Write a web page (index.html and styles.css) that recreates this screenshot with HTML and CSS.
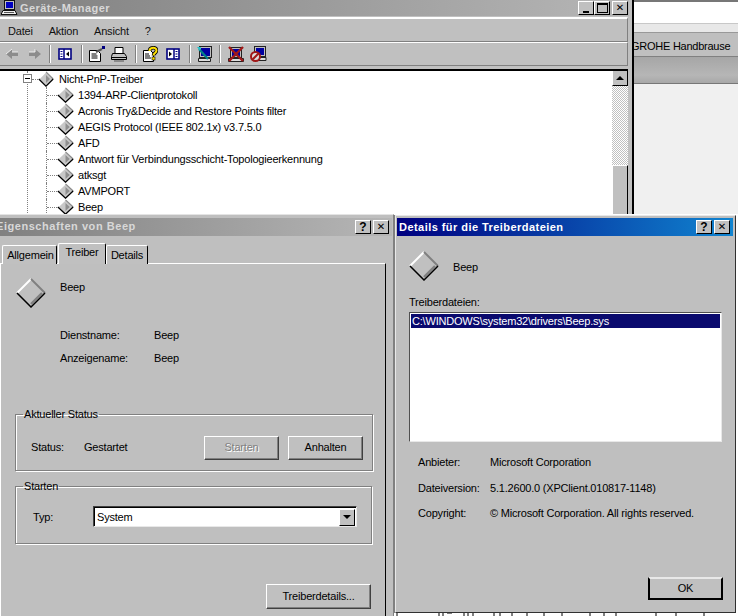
FILE: index.html
```html
<!DOCTYPE html>
<html lang="de">
<head>
<meta charset="utf-8">
<title>Geräte-Manager</title>
<link rel="stylesheet" href="styles.css">
</head>
<body>
<svg class="defs" width="0" height="0" aria-hidden="true">
  <defs>
    <symbol id="dia" viewBox="0 0 20 20" preserveAspectRatio="none">
      <polygon points="10,1 19,10 10,19 1,10" fill="#c8c8c8"/>
      <polygon points="10,5 15,10 10,15" fill="#8f8f8f"/>
      <path d="M1 10 10 1" stroke="#fff" stroke-width="1.400" fill="none"/>
      <path d="M10 1 19 10" stroke="#8a8a8a" stroke-width="1.400" fill="none"/>
      <path d="M1 10 10 19 19 10" stroke="#000" stroke-width="1.500" fill="none"/>
    </symbol>
    <symbol id="bigdia" viewBox="0 0 30 30">
      <polygon points="15,1 29,15 15,29 1,15" fill="#c0c0c0"/>
      <path d="M1 15 15 1" stroke="#fff" stroke-width="2" fill="none"/>
      <path d="M15 1 29 15" stroke="#808080" stroke-width="2" fill="none"/>
      <path d="M1 15 15 29 29 15" stroke="#000" stroke-width="1.500" fill="none"/>
      <path d="M26 15 15 26" stroke="#808080" stroke-width="2.400" fill="none"/>
    </symbol>
  </defs>
</svg>

<section class="win win-right">
  <div class="r-white"></div>
  <div class="r-gap"></div>
  <div class="r-band">GROHE Handbrause</div>
  <div class="r-dark"></div>
  <div class="r-light"></div>
</section>

<section class="win win-dm">
  <header class="title title-gray">
    <svg class="appicon" width="17" height="16" viewBox="0 0 17 16">
      <rect x="3.500" y="0.500" width="10" height="9" fill="#c0c0c0" stroke="#111"/>
      <rect x="5" y="2" width="7" height="6" fill="#0000c0"/>
      <path d="M2 10.500h12l2 4H0z" fill="#eee" stroke="#111"/>
      <path d="M3 12.500h10" stroke="#555"/>
    </svg>
    <span class="title-text dim">Geräte-Manager</span>
    <div class="caps">
      <span class="cap"><i class="min"></i></span><span class="cap"><i class="max"></i></span><span class="cap cap-x">✕</span>
    </div>
  </header>
  <nav class="menubar">
    <span>Datei</span><span>Aktion</span><span>Ansicht</span><span>?</span>
  </nav>
  <div class="toolbar">
    <svg class="m0" width="14" height="12" viewBox="0 0 14 12"><path d="M7 1 1 6l6 5V8h6V4H7z" fill="#8c8c8c"/><path d="M7 1 1 6M7 4h6" stroke="#eee" fill="none"/></svg>
    <svg class="m9" width="14" height="12" viewBox="0 0 14 12"><path d="M7 1l6 5-6 5V8H1V4h6z" fill="#8c8c8c"/><path d="M1 4h6V1" stroke="#eee" fill="none"/></svg>
    <i class="sep m7"></i>
    <svg class="m7" width="14" height="12" viewBox="0 0 14 12"><rect x="1" y="1" width="12" height="10" fill="#fff" stroke="#000080" stroke-width="1.600"/><path d="M6 1v10" stroke="#000080" stroke-width="1.500"/><path d="M11 3.500v5L8 6z" fill="#000"/><path d="M2.500 3.500h2M2.500 6h2M2.500 8.500h2" stroke="#000080"/></svg>
    <i class="sep m9"></i>
    <svg class="m5" width="18" height="16" viewBox="0 0 18 16"><path d="M1.500 4.500h8l3 3v8h-11z" fill="#fff" stroke="#000"/><path d="M3.500 8h5M3.500 10h6M3.500 12h6" stroke="#000"/><path d="M8 6l6-3" stroke="#555" stroke-width="2"/><rect x="14" y="0" width="3" height="3" fill="#000080"/></svg>
    <svg class="m5" width="16" height="15" viewBox="0 0 16 15"><path d="M4 .5h8v6H4z" fill="#fff" stroke="#000"/><path d="M1.500 6.500h12l2 3v3H.5v-3z" fill="#c0c0c0" stroke="#000"/><path d="M1 10.500h14" stroke="#000"/><path d="M3 14h10" stroke="#555"/></svg>
    <i class="sep m8"></i>
    <svg class="m6" width="15" height="16" viewBox="0 0 15 16"><path d="M.5 4.500h7l3 3v8H.5z" fill="#fff" stroke="#000"/><path d="M2 8h4M2 10h5M2 12h6" stroke="#000"/><path d="M6.500 5C6.500 1 13.500.5 13.500 4.500 13.500 7 10.500 7 10.500 9.500" stroke="#000" stroke-width="3.600" fill="none"/><path d="M6.500 5C6.500 1 13.500.5 13.500 4.500 13.500 7 10.500 7 10.500 9.500" stroke="#ffe000" stroke-width="2" fill="none"/><rect x="9" y="11" width="3" height="3" fill="#ffe000" stroke="#000" stroke-width="0.600"/></svg>
    <svg class="m8" width="14" height="12" viewBox="0 0 14 12"><rect x="1" y="1" width="12" height="10" fill="#fff" stroke="#000080" stroke-width="1.600"/><path d="M8 1v10" stroke="#000080" stroke-width="1.500"/><path d="M3 3.500v5L6 6z" fill="#000"/><path d="M9.500 3.500h2M9.500 6h2M9.500 8.500h2" stroke="#000080"/></svg>
    <i class="sep m9"></i>
    <svg class="m6" width="15" height="17" viewBox="0 0 15 17"><rect x="2.500" y="0.500" width="12" height="11" fill="#c0c0c0" stroke="#222"/><rect x="4" y="2" width="9" height="8" fill="#0000a0"/><path d="M1.500 12.500h12v3h-12z" fill="#ddd" stroke="#222"/><path d="M2 3l9 10" stroke="#008088" stroke-width="2.200"/><path d="M0 1l4 0-1 4z" fill="#20c0c8"/></svg>
    <i class="sep m7"></i>
    <svg class="m7" width="16" height="16" viewBox="0 0 16 16"><rect x="2.500" y="1.500" width="11" height="10" fill="#c0c0c0" stroke="#222"/><rect x="4" y="3" width="8" height="7" fill="#0000a0"/><path d="M.5 12.500h15v3H.5z" fill="#ddd" stroke="#222"/><path d="M1 1l14 14M15 1 1 15" stroke="#a01818" stroke-width="2.400"/></svg>
    <svg class="m6" width="17" height="16" viewBox="0 0 17 16"><rect x="4.500" y="0.500" width="11" height="10" fill="#c0c0c0" stroke="#222"/><rect x="6" y="2" width="8" height="7" fill="#0000a0"/><path d="M6 11.500h10v3H6z" fill="#ddd" stroke="#222"/><circle cx="5.500" cy="10.500" r="4.500" fill="#ddd" stroke="#a01818" stroke-width="2"/><path d="M2.500 13.500l6-6" stroke="#a01818" stroke-width="2"/></svg>
  </div>
  <div class="treewrap">
    <ul class="tree">
      <li class="root"><span class="plus"></span><svg class="ic"><use href="#dia"/></svg><span>Nicht-PnP-Treiber</span></li>
      <li><svg class="ic"><use href="#dia"/></svg><span>1394-ARP-Clientprotokoll</span></li>
      <li><svg class="ic"><use href="#dia"/></svg><span>Acronis Try&amp;Decide and Restore Points filter</span></li>
      <li><svg class="ic"><use href="#dia"/></svg><span>AEGIS Protocol (IEEE 802.1x) v3.7.5.0</span></li>
      <li><svg class="ic"><use href="#dia"/></svg><span>AFD</span></li>
      <li><svg class="ic"><use href="#dia"/></svg><span>Antwort für Verbindungsschicht-Topologieerkennung</span></li>
      <li><svg class="ic"><use href="#dia"/></svg><span>atksgt</span></li>
      <li><svg class="ic"><use href="#dia"/></svg><span>AVMPORT</span></li>
      <li><svg class="ic"><use href="#dia"/></svg><span>Beep</span></li>
    </ul>
    <div class="scroll">
      <span class="sbtn"><i class="up"></i></span>
      <span class="sthumb"></span>
    </div>
  </div>
</section>

<section class="win win-props">
  <header class="title title-gray2">
    <span class="title-text dim2">Eigenschaften von Beep</span>
    <div class="caps caps-d">
      <span class="cap cap-q">?</span><span class="cap cap-x">✕</span>
    </div>
  </header>
  <div class="tabs">
    <span class="tab tab-first">Allgemein</span>
    <span class="tab tab-on">Treiber</span>
    <span class="tab tab-last">Details</span>
  </div>
  <div class="panel">
    <div class="headrow">
      <svg class="big"><use href="#bigdia"/></svg>
      <span>Beep</span>
    </div>
    <dl class="kv">
      <div><dt>Dienstname:</dt><dd>Beep</dd></div>
      <div><dt>Anzeigename:</dt><dd>Beep</dd></div>
    </dl>
    <fieldset class="grp grp-status">
      <legend>Aktueller Status</legend>
      <span class="lab-status">Status:</span>
      <span class="val-status">Gestartet</span>
      <span class="btn btn-dis">Starten</span>
      <span class="btn btn-halt">Anhalten</span>
    </fieldset>
    <fieldset class="grp grp-start">
      <legend>Starten</legend>
      <span class="lab-typ">Typ:</span>
      <div class="combo"><span>System</span><span class="cbtn"><i class="down"></i></span></div>
    </fieldset>
    <div class="foot"><span class="btn btn-det">Treiberdetails...</span></div>
  </div>
</section>

<div class="backdrop">
  <svg class="marks" width="344" height="4" viewBox="0 0 344 4"><path d="M3 0v4M45 0v4M49 0v4M53 0h5v1h-5zM70 0v4M74 0v4M79 0v4M100 0v4M106 0v4M118 0v4M133 0v4M150 0v4M168 0v4M196 0v4M210 0v4M222 0v4M262 0v4M282 0v4M310 0v4" stroke="#000" fill="none"/></svg>
</div>

<section class="win win-det">
  <header class="title title-blue">
    <span class="title-text">Details für die Treiberdateien</span>
    <div class="caps caps-d">
      <span class="cap cap-q">?</span><span class="cap cap-x">✕</span>
    </div>
  </header>
  <div class="det-body">
    <div class="headrow headrow-det">
      <svg class="big"><use href="#bigdia"/></svg>
      <span>Beep</span>
    </div>
    <p class="listlab">Treiberdateien:</p>
    <div class="list"><div class="sel">C:\WINDOWS\system32\drivers\Beep.sys</div></div>
    <dl class="info">
      <div><dt>Anbieter:</dt><dd>Microsoft Corporation</dd></div>
      <div><dt>Dateiversion:</dt><dd>5.1.2600.0 (XPClient.010817-1148)</dd></div>
      <div><dt>Copyright:</dt><dd>© Microsoft Corporation. All rights reserved.</dd></div>
    </dl>
    <div class="foot foot-det"><span class="btn btn-ok">OK</span></div>
  </div>
</section>
</body>
</html>
```

FILE: styles.css
```css
* { box-sizing: border-box; }
html, body { margin: 0; padding: 0; }
body {
  width: 738px; height: 616px; overflow: hidden; position: relative;
  background: #c0c0c0; color: #000;
  font: 11px/13px "Liberation Sans", sans-serif;
  letter-spacing: -.2px;
}
.defs { position: absolute; }
ul, dl, dd, p { margin: 0; padding: 0; list-style: none; }
.win { position: absolute; background: #bfbfbf; }

/* right background window */
.win-right { left: 632px; top: 0; width: 106px; height: 616px; border-left: 2px solid #000; display: flex; flex-direction: column; background: #f0f0f0; }
.r-white { height: 24px; margin-top: 0; background: #fff; border-top: 2px solid #777; border-bottom: 1px solid #c8c8c8; flex: none; }
.r-gap { height: 8px; background: #e8e8e8; flex: none; }
.r-band { height: 25px; flex: none; background: #bfbfbf; padding-top: 7px; white-space: nowrap; text-indent: -3px; border-top: 1px solid #999; border-bottom: 1px solid #808080; overflow: hidden; letter-spacing: -.25px; }
.r-dark { height: 27px; flex: none; background: linear-gradient(#a6a6a6, #b6b6b6 70%, #a8a8a8); border-bottom: 1px solid #777; }
.r-light { flex: 1; background: #f0f0f0; }

/* device manager */
.win-dm { left: 0; top: 0; width: 632px; height: 220px; background: #c0c0c0; border-right: 4px solid #c0c0c0; }
.title { display: flex; align-items: center; height: 18px; position: relative; }
.title-gray { height: 16px; margin-right: -1px; background: linear-gradient(90deg, #808080, #b6b6b6); }
.appicon { margin: 0 2px 0 1px; flex: none; }
.title-text { font-weight: 700; font-size: 11px; letter-spacing: .45px; color: #fff; white-space: nowrap; }
.dim { color: #d8d8d8; }
.caps { margin-left: auto; display: flex; margin-right: 1px; }
.cap { width: 16px; height: 14px; background: #c0c0c0; border: 1px solid; border-color: #fff #000 #000 #fff; display: flex; align-items: center; justify-content: center; font-size: 10px; font-weight: 700; line-height: 12px; color: #000; font-family: "DejaVu Sans", sans-serif; letter-spacing: 0; }
.cap + .cap-x { margin-left: 2px; }
.min { display: block; width: 6px; height: 2px; background: #000; margin-top: 7px; }
.max { display: block; width: 11px; height: 10px; border: 1px solid #000; border-top-width: 2px; }
.cap-q { font-family: "Liberation Sans", sans-serif; font-size: 12px; }

.menubar { height: 25px; display: flex; gap: 16px; padding: 5px 0 0 8px; line-height: 15px; color: #111; border-top: 2px solid #fff; border-bottom: 1px solid #808080; margin-top: 1px; border-right: 1px solid #808080; }
.toolbar { height: 24px; display: flex; align-items: center; padding-left: 5px; border-top: 1px solid #fff; border-bottom: 1px solid #808080; border-right: 1px solid #808080; }
.toolbar svg, .sep { flex: none; }
.m0 { margin-left: 0; }
.m5 { margin-left: 5px; }
.m6 { margin-left: 6px; }
.m7 { margin-left: 7px; }
.m8 { margin-left: 8px; }
.m9 { margin-left: 9px; }
.sep { width: 2px; height: 18px; background: linear-gradient(90deg, #808080 50%, #fff 50%); }

.treewrap { position: relative; height: 151px; margin-top: 3px; background: #fff; border-top: 2px solid #000; overflow: hidden; }
.tree { position: relative; }
.tree::before { content: ""; position: absolute; left: 27px; top: 0; bottom: 0; border-left: 1px dotted #808080; }
.tree li { position: relative; height: 16px; display: flex; align-items: center; padding-left: 57px; white-space: nowrap; line-height: 16px; }
.tree li .ic { width: 17px; height: 16px; flex: none; margin-right: 4px; }
.tree li.root { padding-left: 38px; }
.tree li.root .ic { width: 16px; margin-right: 5px; }
.tree li::before { content: ""; position: absolute; left: 46px; top: 0; height: 16px; border-left: 1px dotted #808080; }
.tree li::after { content: ""; position: absolute; left: 47px; top: 8px; width: 10px; border-top: 1px dotted #808080; }
.tree li.root::before { display: none; }
.tree li.root::after { left: 32px; width: 6px; }
.plus { position: absolute; left: 23px; top: 3px; width: 9px; height: 9px; background: #fff; border: 1px solid #808080; z-index: 1; }
.plus::after { content: ""; position: absolute; left: 1px; top: 3px; width: 5px; height: 1px; background: #000; }

.scroll { position: absolute; left: 612px; top: -1px; width: 16px; height: 151px; background: repeating-conic-gradient(#fff 0 25%, #c0c0c0 0 50%) 0 0 / 2px 2px; }
.sbtn { display: flex; align-items: center; justify-content: center; width: 16px; height: 16px; background: #c0c0c0; border: 1px solid; border-color: #fff #000 #000 #fff; }
.up { width: 0; height: 0; border: 4px solid transparent; border-top: 0; border-bottom-color: #000; }
.sthumb { position: absolute; left: 0; top: 95px; width: 16px; height: 56px; background: #c0c0c0; border: 1px solid; border-color: #fff #000 #000 #fff; }

/* properties dialog */
.win-props { left: -4px; top: 214px; width: 398px; height: 402px; padding-top: 3px; border-top: 1px solid #e4e4e4; border-right: 1px solid #808080; }
.title-gray2 { height: 18px; background: linear-gradient(90deg, #808080, #b6b6b6); margin-right: 1px; }
.dim2 { color: #d8d8d8; letter-spacing: .55px; margin-top: -2px; }
.caps-d { margin-right: 3px; }
.tabs { display: flex; align-items: flex-end; height: 28px; padding: 0 0 0 6px; position: relative; z-index: 1; margin-bottom: -1px; }
.tab { height: 19px; padding-top: 3px; text-align: center; background: #c0c0c0; border: 1px solid; border-color: #fff #000 transparent #fff; border-bottom: 0; border-radius: 2px 2px 0 0; }
.tab-first { width: 55px; padding-left: 2px; }
.tab-on { width: 48px; height: 21px; padding-top: 2px; margin-left: 1px; }
.tab-last { width: 42px; margin-left: 0; }
.panel { margin-left: 4px; width: 386px; height: 353px; border: 1px solid; border-color: #fff #000 #000 #fff; border-bottom: 0; position: relative; }
.headrow { display: flex; align-items: flex-start; padding: 14px 0 0 15px; height: 46px; }
.big { width: 30px; height: 30px; flex: none; margin-right: 14px; }
.headrow span { margin-top: 3px; }
.kv { margin: 19px 0 0 59px; }
.kv div { display: flex; height: 23px; }
.kv dt { width: 94px; }
.grp { position: absolute; border: 1px solid #808080; box-shadow: inset 1px 1px 0 #fff, 1px 1px 0 #fff; margin: 0; padding: 0; min-width: 0; }
.grp legend { padding: 0 1px; margin-left: 7px; line-height: 13px; }
.grp-status { left: 14px; top: 144px; width: 358px; height: 63px; }
.grp-start { left: 14px; top: 216px; width: 357px; height: 64px; }
.lab-status, .val-status, .lab-typ { position: absolute; }
.lab-status { left: 15px; top: 20px; }
.val-status { left: 68px; top: 20px; }
.btn { display: flex; align-items: center; justify-content: center; background: #c0c0c0; border: 1px solid; border-color: #fff #404040 #404040 #fff; box-shadow: inset -1px -1px 0 #808080; }
.btn-dis { position: absolute; left: 188px; top: 15px; width: 75px; height: 24px; padding-bottom: 1px; color: #808080; text-shadow: 1px 1px 0 #fff; }
.btn-halt { position: absolute; left: 272px; top: 15px; width: 75px; height: 24px; padding-bottom: 1px; }
.lab-typ { left: 17px; top: 18px; }
.combo { position: absolute; left: 77px; top: 13px; width: 264px; height: 21px; background: #fff; border: 1px solid; border-color: #404040 #e8e8e8 #e8e8e8 #404040; box-shadow: inset 1px 1px 0 #000; display: flex; align-items: center; justify-content: space-between; padding-left: 3px; padding-top: 1px; }
.cbtn { width: 16px; height: 17px; margin-right: 1px; background: #c0c0c0; border: 1px solid; border-color: #fff #000 #000 #fff; display: flex; align-items: center; justify-content: center; }
.down { width: 0; height: 0; border: 4px solid transparent; border-bottom: 0; border-top-color: #000; }
.foot { position: absolute; left: 0; right: 0; top: 320px; display: flex; justify-content: flex-end; padding-right: 14px; }
.btn-det { width: 105px; height: 25px; }

/* details dialog */
.backdrop { position: absolute; left: 394px; top: 214px; width: 344px; height: 402px; background: #fff; }
.marks { position: absolute; left: 0; bottom: 0; display: block; }
.win-det { left: 395px; top: 215px; width: 341px; height: 398px; padding: 2px 2px 0 1px; border: 1px solid; border-color: #e8e8e8 #303030 #303030 #e8e8e8; box-shadow: -2px 0 0 #808080; }
.title-blue { height: 18px; background: linear-gradient(90deg, #000080, #1084d0); }
.title-blue .title-text { margin-left: 2px; }
.title-blue .caps-d { margin-right: 3px; }
.det-body { position: relative; height: 372px; }
.headrow-det { padding: 15px 0 0 12px; height: 47px; }
.headrow-det span { margin-top: 10px; }
.listlab { margin: 13px 0 0 12px; }
.list { width: 313px; height: 130px; margin: 3px 0 0 12px; background: #fff; border: 1px solid; border-color: #505050 #e8e8e8 #e8e8e8 #505050; padding: 1px 1px 0 1px; }
.sel { background: #0a0a6e; color: #fff; height: 14px; line-height: 14px; padding-left: 1px; white-space: nowrap; }
.info { margin: 14px 0 0 21px; }
.info div { display: flex; height: 25.500px; }
.info dt { width: 72px; }
.foot-det { top: 341px; padding-right: 10px; }
.btn-ok { width: 75px; height: 23px; border: 2px solid #000; box-shadow: none; border-color: #e8e8e8 #000 #000 #000; }
```
